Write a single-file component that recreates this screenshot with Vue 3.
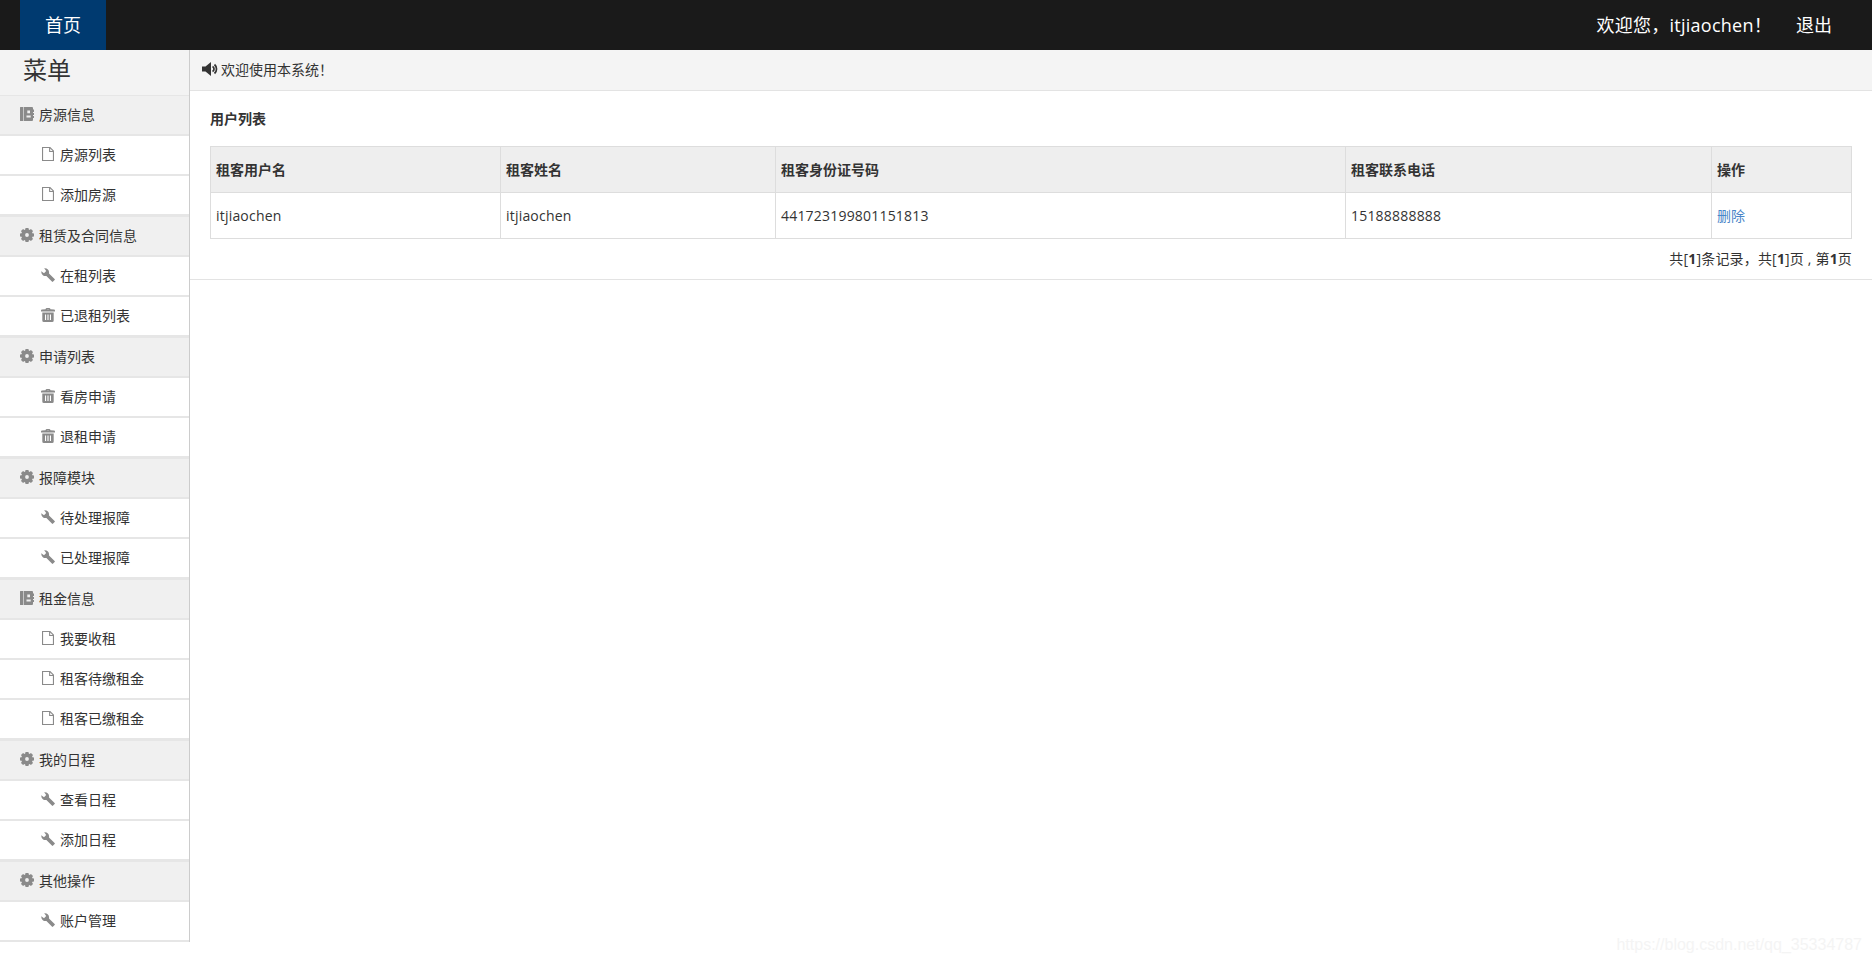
<script setup>
function gearPath() {
  const c = 7, teeth = 8
  const pts = []
  for (let i = 0; i < teeth; i++) {
    const a = (i * 2 * Math.PI) / teeth
    const w = 0.27
    pts.push([a - w * 1.2, 5.7], [a - w * 0.75, 7.2], [a + w * 0.75, 7.2], [a + w * 1.2, 5.7])
  }
  const outer = pts
    .map(([a, r], i) => `${i ? 'L' : 'M'}${(c + r * Math.sin(a)).toFixed(2)} ${(c - r * Math.cos(a)).toFixed(2)}`)
    .join('')
  return `${outer}ZM7 5.100a1.900 1.900 0 1 0 0 3.800a1.900 1.900 0 0 0 0-3.800Z`
}

const icons = {
  book: 'M0 .5A.5.5 0 0 1 .5 0H3v14H.5a.5.5 0 0 1-.5-.5ZM3.600 0H12a1 1 0 0 1 1 1v1.500h1v2.500h-1v1h1v2h-1v1h1v2h-1V13a1 1 0 0 1-1 1H3.600ZM7.300 3.500v2.800h2.700V3.500ZM6.500 8.500v2h4.200v-2Z',
  gear: gearPath(),
  file: 'M1 0h8.200L13 3.800V14H1ZM2.100 1.100v11.800h9.800V5H8.100V1.100ZM9.200 1.500V3.900h2.400Z',
  wrench: 'M.3 3.200 3 5.200 5.200 3 3.200.3A4.300 4.300 0 0 1 8 5.400l5.600 5.500q.6.6 0 1.200l-1.500 1.500q-.6.6-1.200 0L5.400 8A4.300 4.300 0 0 1 .3 3.200Z',
  trash: 'M4.500 1.200Q4.700 0 6 0h2q1.300 0 1.500 1.200L13 1.500q1 .1 1 1V3.500H0V2.500q0-.9 1-1ZM5.800 1.300h2.400Q8.100.9 7.700.9H6.300q-.4 0-.5.4ZM1.300 4.400h11.400V12.500A1.500 1.500 0 0 1 11.200 14H2.800A1.500 1.500 0 0 1 1.300 12.500ZM4 6.500V12H5.100V6.500ZM6.450 6.500V12H7.550V6.500ZM8.900 6.500V12H10V6.500Z',
}

const menu = [
  { title: '房源信息', icon: 'book', items: [['房源列表', 'file'], ['添加房源', 'file']] },
  { title: '租赁及合同信息', icon: 'gear', items: [['在租列表', 'wrench'], ['已退租列表', 'trash']] },
  { title: '申请列表', icon: 'gear', items: [['看房申请', 'trash'], ['退租申请', 'trash']] },
  { title: '报障模块', icon: 'gear', items: [['待处理报障', 'wrench'], ['已处理报障', 'wrench']] },
  { title: '租金信息', icon: 'book', items: [['我要收租', 'file'], ['租客待缴租金', 'file'], ['租客已缴租金', 'file']] },
  { title: '我的日程', icon: 'gear', items: [['查看日程', 'wrench'], ['添加日程', 'wrench']] },
  { title: '其他操作', icon: 'gear', items: [['账户管理', 'wrench']] },
]
</script>

<template>
  <div class="page">
    <header class="topbar">
      <a class="home">首页</a>
      <div class="user">
        <span class="welcome">欢迎您，itjiaochen！</span>
        <a class="logout">退出</a>
      </div>
    </header>
    <div class="body">
      <aside class="sidebar">
        <h2 class="menu-title">菜单</h2>
        <section v-for="group in menu" :key="group.title">
          <div class="group">
            <svg class="icon" viewBox="0 0 14 14"><path fill-rule="evenodd" :d="icons[group.icon]" /></svg>
            <span>{{ group.title }}</span>
          </div>
          <div v-for="item in group.items" :key="item[0]" class="item">
            <svg class="icon" viewBox="0 0 14 14"><path fill-rule="evenodd" :d="icons[item[1]]" /></svg>
            <span>{{ item[0] }}</span>
          </div>
        </section>
      </aside>
      <main class="main">
        <div class="notice">
          <svg class="speaker" viewBox="0 0 16 14">
            <path d="M0 4.500h3.500L9 0v14L3.500 9.500H0z" />
            <path class="wave" d="M10.500 4.500a2.800 2.800 0 0 1 0 5M12.500 2.500a6 6 0 0 1 0 9" />
          </svg>
          <span>欢迎使用本系统！</span>
        </div>
        <div class="panel">
          <h3 class="panel-title">用户列表</h3>
          <table class="table">
            <colgroup>
              <col class="c1" /><col class="c2" /><col class="c3" /><col class="c4" /><col />
            </colgroup>
            <thead>
              <tr>
                <th>租客用户名</th>
                <th>租客姓名</th>
                <th>租客身份证号码</th>
                <th>租客联系电话</th>
                <th>操作</th>
              </tr>
            </thead>
            <tbody>
              <tr>
                <td>itjiaochen</td>
                <td>itjiaochen</td>
                <td>441723199801151813</td>
                <td>15188888888</td>
                <td><a class="del">删除</a></td>
              </tr>
            </tbody>
          </table>
          <div class="pager">共[<b>1</b>]条记录，共[<b>1</b>]页 , 第<b>1</b>页</div>
        </div>
      </main>
    </div>
    <div class="watermark">https://blog.csdn.net/qq_35334787</div>
  </div>
</template>

<style>
html, body { margin: 0; background: #fff; }
</style>

<style scoped>
.page {
  position: relative;
  height: 962px;
  overflow: hidden;
  font-family: "Open Sans", "Noto Sans CJK SC", sans-serif;
  font-size: 14px;
  color: #333;
}
.topbar {
  height: 50px;
  background: #1a1a1a;
  display: flex;
  justify-content: space-between;
  padding-left: 20px;
  padding-right: 40px;
  color: #fff;
  font-size: 18px;
}
.home {
  width: 86px;
  padding-bottom: 2px;
  background: #003a70;
  display: flex;
  align-items: center;
  justify-content: center;
}
.user { display: flex; align-items: center; gap: 24px; padding-bottom: 2px; }
.welcome { letter-spacing: .26px; }
.body { display: flex; align-items: flex-start; }
.sidebar {
  width: 189px;
  border-right: 1px solid #ccc;
  background: #fff;
}
.menu-title {
  margin: 0;
  height: 45px;
  padding-left: 23px;
  background: #f3f3f3;
  font-size: 24px;
  font-weight: 400;
  line-height: 40px;
}
.group, .item { display: flex; align-items: center; box-sizing: border-box; }
.group {
  height: 41px;
  padding-left: 20px;
  padding-bottom: 2px;
  gap: 5px;
  background: #f0f0f0;
  border-top: 1px solid #e6e6e6;
  border-bottom: 2px solid #e6e6e6;
}
.item {
  height: 40px;
  padding-left: 41px;
  padding-bottom: 2px;
  gap: 5px;
  border-bottom: 2px solid #e6e6e6;
}
.icon { width: 14px; height: 14px; fill: #8a8a8a; flex: none; }
.main { flex: 1; min-width: 0; }
.notice {
  height: 41px;
  box-sizing: border-box;
  background: #f4f4f4;
  border-bottom: 1px solid #e3e3e3;
  padding: 0 0 3px 12px;
  display: flex;
  align-items: center;
  gap: 3px;
}
.speaker { width: 16px; height: 14px; fill: #333; }
.wave { fill: none; stroke: #333; stroke-width: 1.700; }
.panel {
  padding: 0 20px;
  border-bottom: 1px solid #e3e3e3;
}
.panel-title {
  margin: 0;
  height: 55px;
  font-size: 14px;
  font-weight: 700;
  line-height: 56px;
}
.table {
  width: 100%;
  table-layout: fixed;
  border-collapse: collapse;
}
.c1 { width: 290px; }
.c2 { width: 275px; }
.c3 { width: 570px; }
.c4 { width: 366px; }
.table th, .table td {
  height: 46px;
  padding: 0 5px;
  text-align: left;
  border: 1px solid #ddd;
  box-sizing: border-box;
}
.table th { background: #eee; font-weight: 700; padding-bottom: 2px; }
.table td { letter-spacing: .2px; }
.del { display: block; color: #4a86c8; letter-spacing: 0; padding-bottom: 2px; }
.pager { text-align: right; line-height: 40px; height: 40px; letter-spacing: .18px; }
.watermark {
  position: absolute;
  right: 10px;
  bottom: 8px;
  font-family: "Liberation Sans", sans-serif;
  font-size: 16px;
  color: #f4f4f4;
}
</style>
